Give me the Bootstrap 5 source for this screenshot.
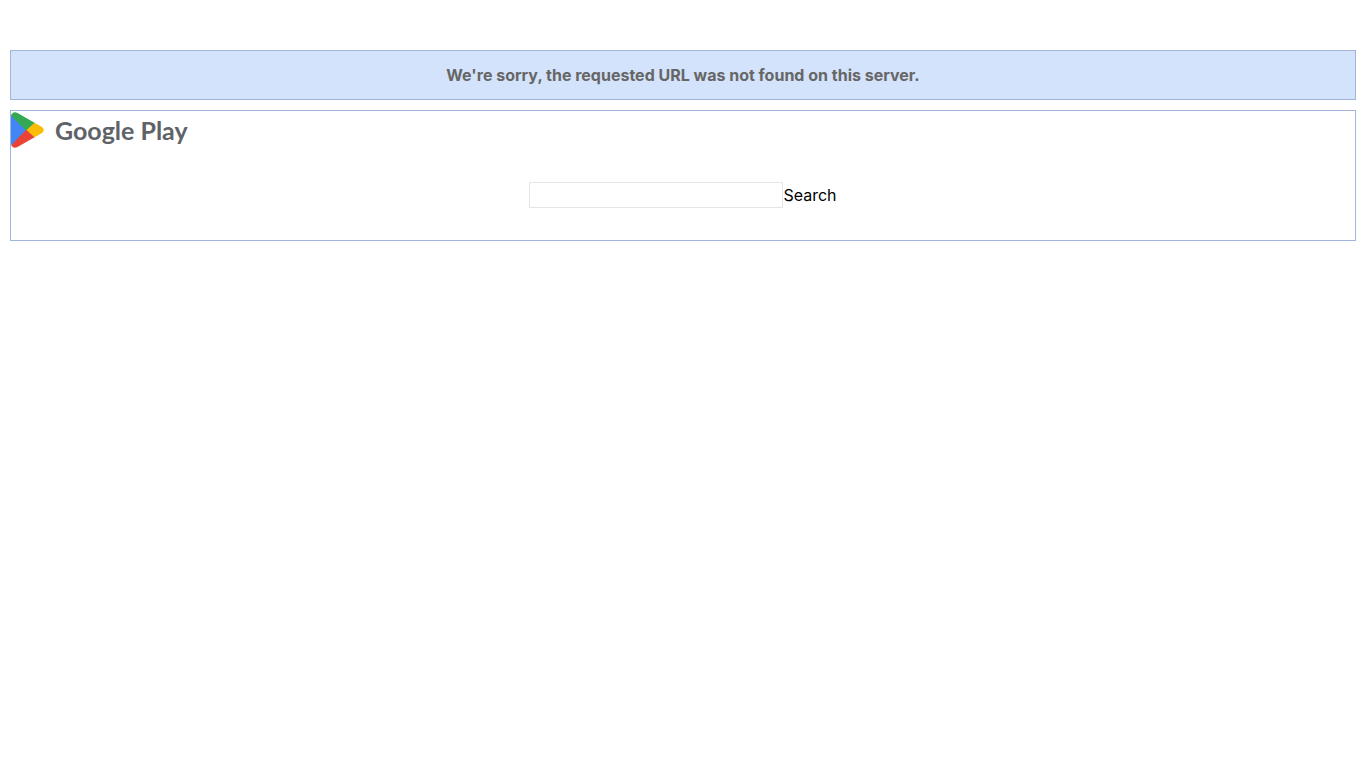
<!DOCTYPE html>
<html lang="en">
<head>
<meta charset="utf-8">
<meta name="viewport" content="width=device-width, initial-scale=1">
<title>Not Found</title>
<link href="https://cdn.jsdelivr.net/npm/bootstrap@5.3.0/dist/css/bootstrap.min.css" rel="stylesheet">
<style>
  body { font-family: Inter, sans-serif; font-size: 16px; line-height: 24px; color: #000; background: #fff; }
  .page { padding: 50px 10px 0; gap: 10px; }
  .panel { border: 1px solid #a0b4dc; }
  .notice { background: #d3e3fb; color: #666; padding: 12px; }
  .brand { height: 38px; gap: 11px; color: #5f6368; font: 700 25px/38px Lato, sans-serif; }
  .brand:hover { color: #5f6368; }
  .search-area { padding: 33px 0 32px; }
  .query { width: 254px; height: 26px; border: 1px solid #e3e5e8; border-radius: 0; padding: 0 4px; }
  .search-btn { line-height: 26px; color: #000; }
</style>
</head>
<body>
<main class="page d-flex flex-column">
  <div class="panel notice text-center fw-bold">We're sorry, the requested URL was not found on this server.</div>
  <section class="panel">
    <a class="brand d-inline-flex align-items-center text-decoration-none align-top" href="#">
      <svg width="33" height="36" viewBox="0 0 33 36" aria-hidden="true">
        <path fill="#4285f4" d="M1 2Q0 3 0 5V31Q0 33 1 34L17 18Z"/>
        <path fill="#34a853" d="M.5 3C1 .5 4 -.4 6.500 1L24 11L15.500 19L.5 4Z"/>
        <path fill="#ea4335" d="M.5 33C1 35.600 4 36.400 6.500 35L24 25L15.500 17.500Z"/>
        <path fill="#fbbc04" d="M23.500 10.700L31 15Q34.500 18 31 21L23.500 25.300L15.500 18Z"/>
      </svg>
      <span>Google Play</span>
    </a>
    <form class="search-area d-flex justify-content-center" onsubmit="return false">
      <input class="query" type="text" aria-label="Search Google Play">
      <button class="search-btn border-0 bg-transparent p-0" type="submit">Search</button>
    </form>
  </section>
</main>
<script src="https://cdn.jsdelivr.net/npm/bootstrap@5.3.0/dist/js/bootstrap.bundle.min.js"></script>
</body>
</html>
